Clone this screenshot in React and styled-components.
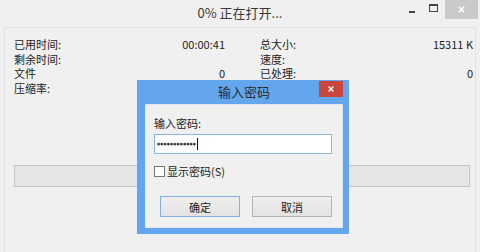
import React from 'react';
import styled, { createGlobalStyle } from 'styled-components';

const Global = createGlobalStyle`
  html, body { margin: 0; padding: 0; background: #f0f0f0; }
  body { font-family: "Noto Sans CJK SC", "Noto Sans", sans-serif; color: #222; }
`;

const Window = styled.div`
  position: relative;
  width: 480px;
  height: 252px;
  display: flex;
  flex-direction: column;
  background: #f0f0f0;
  overflow: hidden;
`;

const TitleBar = styled.div`
  height: 27px;
  display: grid;
  grid-template-columns: 1fr auto 1fr;
  align-items: start;
`;

const Title = styled.div`
  font-size: 13px;
  line-height: 27px;
  color: #3a3a3a;
  margin-top: -1px;
`;

const Controls = styled.div`
  justify-self: end;
  display: flex;
  align-items: flex-start;
  margin-right: 2px;
`;

const CtrlBtn = styled.div`
  width: ${p => p.$w}px;
  height: 19px;
  display: flex;
  align-items: center;
  justify-content: center;
  background: ${p => p.$bg || 'transparent'};
`;

const MinGlyph = styled.div`
  width: 6px;
  height: 2px;
  background: #444;
  margin-top: 4px;
`;

const MaxGlyph = styled.div`
  width: 7px;
  height: 5px;
  border: 1px solid #444;
  border-top-width: 2px;
  margin-top: -3px;
`;

const Panel = styled.div`
  flex: 1;
  margin: 0 4px;
  border: 1px solid #e2e2e2;
  border-bottom: none;
  padding: 9px 5px 0 9px;
`;

const Stats = styled.div`
  display: grid;
  grid-template-columns: 211px 213px;
  column-gap: 35px;
  font-size: 11px;
  line-height: 14.5px;
`;

const Cell = styled.div`
  display: flex;
  justify-content: space-between;
  height: 14.5px;
`;

const Progress = styled.div`
  margin-top: 70px;
  height: 20px;
  border: 1px solid #c4c4c4;
  background: #e6e6e6;
`;

const Dialog = styled.div`
  position: absolute;
  left: 137px;
  top: 80px;
  width: 212px;
  height: 154px;
  background: #64a6ee;
  display: flex;
  flex-direction: column;
  box-sizing: border-box;
  padding: 0 6px 6px 8px;
`;

const DlgTitleBar = styled.div`
  height: 24px;
  display: grid;
  grid-template-columns: 1fr auto;
  align-items: start;
`;

const DlgTitle = styled.div`
  font-size: 13px;
  line-height: 24px;
  text-align: center;
  padding-left: 24px;
  color: #2a2a2a;
`;

const DlgClose = styled.div`
  width: 24px;
  height: 16px;
  margin-top: 1px;
  background: #c9463d;
  display: flex;
  align-items: center;
  justify-content: center;
`;

const DlgBody = styled.div`
  flex: 1;
  background: #f0f0f0;
  border: 1px solid #dfe9f5;
  padding: 10px 10px 0 8px;
  display: flex;
  flex-direction: column;
`;

const Label = styled.div`
  font-size: 11px;
  line-height: 16px;
`;

const Input = styled.div`
  margin-top: 3px;
  height: 20px;
  box-sizing: border-box;
  background: #fff;
  border: 1px solid #86b7e8;
  display: flex;
  align-items: center;
  padding-left: 2px;
`;

const Dots = styled.span`
  font-size: 3.5px;
  letter-spacing: 0.2px;
  color: #333;
  font-family: "DejaVu Sans", sans-serif;
`;

const Caret = styled.span`
  width: 1px;
  height: 12px;
  background: #111;
  margin-left: 1px;
`;

const CheckRow = styled.label`
  margin-top: 10px;
  display: flex;
  align-items: center;
  font-size: 11px;
  line-height: 14px;
`;

const Box = styled.span`
  width: 9px;
  height: 9px;
  border: 1px solid #777;
  background: #fff;
  margin-right: 2px;
`;

const Buttons = styled.div`
  margin-top: 18px;
  display: flex;
  justify-content: flex-end;
  gap: 12px;
`;

const Button = styled.div`
  width: 80px;
  height: 21px;
  box-sizing: border-box;
  border: 1px solid ${p => (p.$primary ? '#7fb2e6' : '#b4b4b4')};
  background: linear-gradient(#efefef, #e3e3e3);
  font-size: 11px;
  display: flex;
  align-items: center;
  justify-content: center;
`;

const X = ({ color, size }) => (
  <svg width={size} height={size} viewBox="0 0 10 10">
    <path d="M2 2 L8 8 M8 2 L2 8" stroke={color} strokeWidth="1.8" />
  </svg>
);

const rows = [
  ['已用时间:', '00:00:41', '总大小:', '15311 K'],
  ['剩余时间:', '', '速度:', ''],
  ['文件', '0', '已处理:', '0'],
  ['压缩率:', '', '', ''],
];

export default function App() {
  return (
    <Window>
      <Global />
      <TitleBar>
        <div />
        <Title>0% 正在打开...</Title>
        <Controls>
          <CtrlBtn $w={19}><MinGlyph /></CtrlBtn>
          <CtrlBtn $w={24}><MaxGlyph /></CtrlBtn>
          <CtrlBtn $w={33} $bg="#c9c9c9"><X color="#fff" size={9} /></CtrlBtn>
        </Controls>
      </TitleBar>
      <Panel>
        <Stats>
          {rows.map((r, i) => (
            <React.Fragment key={i}>
              <Cell><span>{r[0]}</span><span>{r[1]}</span></Cell>
              <Cell><span>{r[2]}</span><span>{r[3]}</span></Cell>
            </React.Fragment>
          ))}
        </Stats>
        <Progress />
      </Panel>

      <Dialog>
        <DlgTitleBar>
          <DlgTitle>输入密码</DlgTitle>
          <DlgClose><X color="#fff" size={8} /></DlgClose>
        </DlgTitleBar>
        <DlgBody>
          <Label>输入密码:</Label>
          <Input>
            <Dots>●●●●●●●●●●●●</Dots>
            <Caret />
          </Input>
          <CheckRow>
            <Box />
            显示密码(S)
          </CheckRow>
          <Buttons>
            <Button $primary>确定</Button>
            <Button>取消</Button>
          </Buttons>
        </DlgBody>
      </Dialog>
    </Window>
  );
}
